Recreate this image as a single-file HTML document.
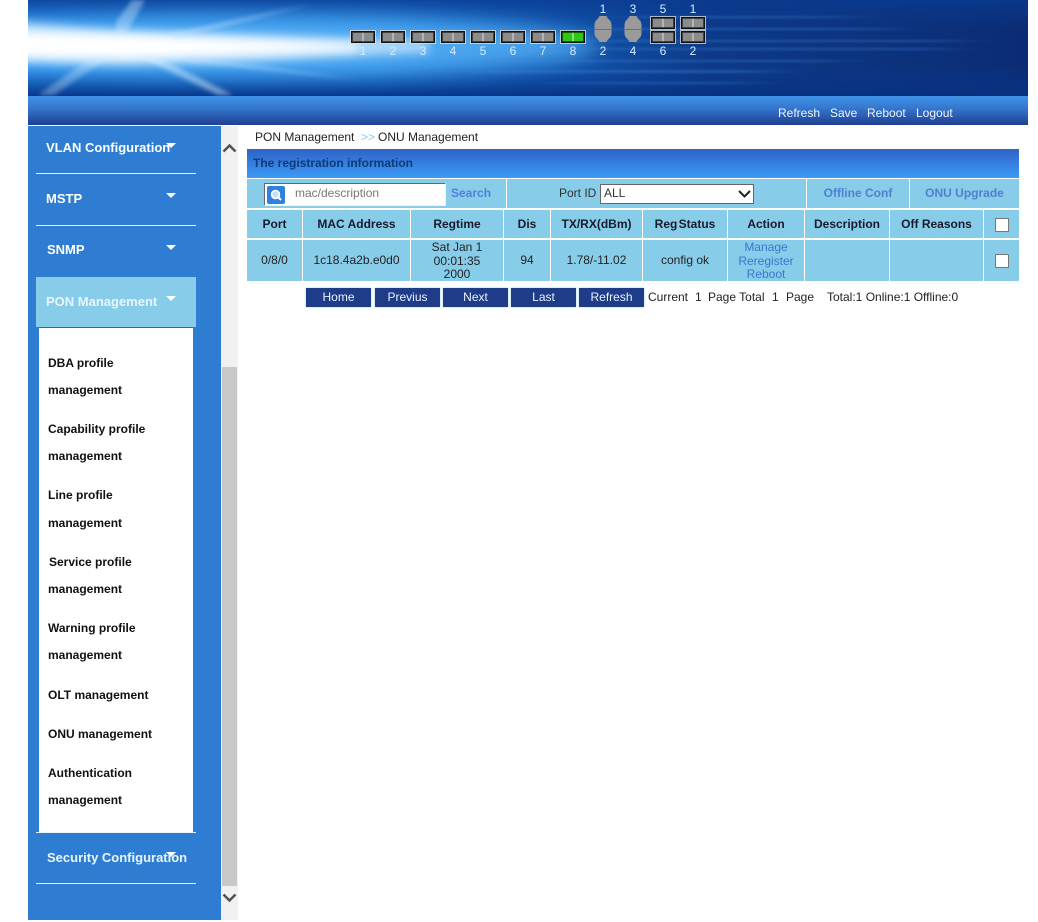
<!DOCTYPE html>
<html><head><meta charset="utf-8"><title>ONU Management</title>
<style>
html,body{margin:0;padding:0;background:#fff;width:1038px;height:922px;overflow:hidden}
body{position:relative;font-family:"Liberation Sans",sans-serif;font-size:12px;color:#222}
.a{position:absolute;white-space:nowrap}
.c{text-align:center}
.p{position:absolute;width:22px;height:10px;border:1px solid #111;box-shadow:0 0 0 1px rgba(225,225,225,.75),inset 0 0 0 1px rgba(0,0,0,.55);background:linear-gradient(90deg,#8c8c8c 0,#8c8c8c 47%,#dcdcdc 47%,#dcdcdc 53%,#8c8c8c 53%)}
.n{position:absolute;width:20px;text-align:center;font-size:12px;line-height:14px;color:#d4ecff}
.bar{position:absolute;background:#87cde9}
.h{position:absolute;top:210px;height:28px;line-height:28px;text-align:center;font-weight:bold;color:#1a1a2a;background:#87cde9}
.d{position:absolute;top:240px;height:41px;line-height:41px;text-align:center;color:#222;background:#87cde9}
.btn{position:absolute;top:288px;height:19px;width:65px;line-height:19px;text-align:center;color:#e8f2ff;background:#1f3c88;box-shadow:0 0 2px #8fc8ea}
.m{position:absolute;font-weight:bold;font-size:13px;line-height:16px;color:#fff;white-space:nowrap}
.s{position:absolute;left:48px;font-weight:bold;font-size:12px;line-height:16px;color:#111;white-space:nowrap}
.l{position:absolute;left:36px;width:160px;height:1px;background:#e8f4fc}
.t{position:absolute;width:0;height:0;border-left:5px solid transparent;border-right:5px solid transparent;border-top:5px solid #fff}
.cb{position:absolute;width:12px;height:12px;background:#fff;border:1px solid #777;border-radius:1px}
.lk{color:#3f74d0}
</style></head><body>

<svg class="a" style="left:28px;top:0" width="1000" height="96" viewBox="0 0 1000 96">
<defs>
<linearGradient id="bg" x1="0" x2="1" y1="0" y2="0"><stop offset="0" stop-color="#1a80e0"/><stop offset=".35" stop-color="#1a78d8"/><stop offset=".52" stop-color="#1258b0"/><stop offset=".68" stop-color="#0d3a88"/><stop offset="1" stop-color="#0b2c74"/></linearGradient>
<linearGradient id="v" x1="0" x2="0" y1="0" y2="1"><stop offset="0" stop-color="#0a3a90" stop-opacity=".8"/><stop offset=".3" stop-color="#0a3a90" stop-opacity="0"/><stop offset=".68" stop-color="#0a3a90" stop-opacity="0"/><stop offset="1" stop-color="#073080" stop-opacity=".9"/></linearGradient>
<filter id="b1" x="-30%" y="-60%" width="160%" height="220%"><feGaussianBlur stdDeviation="2"/></filter>
<filter id="b2" x="-30%" y="-100%" width="160%" height="300%"><feGaussianBlur stdDeviation="5"/></filter>
<filter id="b3" x="-30%" y="-100%" width="160%" height="300%"><feGaussianBlur stdDeviation="10"/></filter>
<filter id="st" x="-30%" y="-400%" width="160%" height="900%"><feGaussianBlur stdDeviation="25 1"/></filter>
</defs>
<rect width="1000" height="96" fill="url(#bg)"/>
<rect width="1000" height="96" fill="url(#v)"/>
<ellipse cx="200" cy="46" rx="370" ry="30" fill="#55b0f6" opacity=".85" filter="url(#b3)"/>
<polygon points="-30,20 90,31 230,35 400,41 400,52 230,61 90,65 -30,61" fill="#d8eeff" opacity=".75" filter="url(#b2)"/>
<polygon points="-30,31 100,34 240,40 330,44 330,50 240,54 100,59 -30,57" fill="#fff" filter="url(#b2)"/>
<polygon points="117,0 104,0 88,22 88,34 98,34" fill="#d4ecff" opacity=".4" filter="url(#b1)"/>
<polygon points="10,95 62,58 80,58 26,95" fill="#d4ecff" opacity=".33" filter="url(#b1)"/>
<polygon points="108,55 126,55 205,95 190,95" fill="#d8eeff" opacity=".48" filter="url(#b1)"/>
<polygon points="140,34 285,4 150,38" fill="#bfe2ff" opacity=".5" filter="url(#b1)"/>
<polygon points="160,56 335,80 160,62" fill="#bfe2ff" opacity=".45" filter="url(#b1)"/>
<g fill="#3f80d8" opacity=".4" filter="url(#st)">
<rect x="600" y="16" width="220" height="2"/><rect x="570" y="28" width="290" height="2"/><rect x="560" y="40" width="370" height="2"/><rect x="530" y="48" width="390" height="2"/><rect x="490" y="60" width="320" height="2"/><rect x="440" y="70" width="300" height="3"/><rect x="530" y="82" width="190" height="2"/>
</g>
</svg>

<div class="a" style="left:28px;top:96px;width:1000px;height:29px;background:linear-gradient(#3f92e8,#3578d0 40%,#1f3f92)"></div>
<div class="a" style="left:778px;top:105px;line-height:16px;color:#eef6ff">Refresh</div>
<div class="a" style="left:830px;top:105px;line-height:16px;color:#eef6ff">Save</div>
<div class="a" style="left:867px;top:105px;line-height:16px;color:#eef6ff">Reboot</div>
<div class="a" style="left:916px;top:105px;line-height:16px;color:#eef6ff">Logout</div>

<div class="p" style="left:351px;top:31px"></div>
<div class="p" style="left:381px;top:31px"></div>
<div class="p" style="left:411px;top:31px"></div>
<div class="p" style="left:441px;top:31px"></div>
<div class="p" style="left:471px;top:31px"></div>
<div class="p" style="left:501px;top:31px"></div>
<div class="p" style="left:531px;top:31px"></div>
<div class="p" style="left:561px;top:31px;background:linear-gradient(90deg,#2ec814 0,#2ec814 47%,#d8f0d0 47%,#d8f0d0 53%,#2ec814 53%)"></div>
<div class="p" style="left:651px;top:17px"></div>
<div class="p" style="left:651px;top:31px"></div>
<div class="p" style="left:681px;top:17px"></div>
<div class="p" style="left:681px;top:31px"></div>
<svg class="a" style="left:594px;top:15px" width="48" height="29" viewBox="0 0 48 29">
<g><path d="M5 1H12L13 3L16 6L17 9V19L16 22L13 25L12 27H5L4 25L1 22L0 19V9L1 6L4 3Z" transform="translate(.5 0)" fill="#9a9a9a"/><path d="M0 14.500H17" stroke="#4a78a8" stroke-width="1"/></g>
<g transform="translate(30 0)"><path d="M5 1H12L13 3L16 6L17 9V19L16 22L13 25L12 27H5L4 25L1 22L0 19V9L1 6L4 3Z" transform="translate(.5 0)" fill="#9a9a9a"/><path d="M0 14.500H17" stroke="#4a78a8" stroke-width="1"/></g>
</svg>
<div class="n" style="left:353px;top:44px">1</div><div class="n" style="left:383px;top:44px">2</div><div class="n" style="left:413px;top:44px">3</div><div class="n" style="left:443px;top:44px">4</div><div class="n" style="left:473px;top:44px">5</div><div class="n" style="left:503px;top:44px">6</div><div class="n" style="left:533px;top:44px">7</div><div class="n" style="left:563px;top:44px">8</div>
<div class="n" style="left:593px;top:44px">2</div><div class="n" style="left:623px;top:44px">4</div><div class="n" style="left:653px;top:44px">6</div><div class="n" style="left:683px;top:44px">2</div>
<div class="n" style="left:593px;top:2px">1</div><div class="n" style="left:623px;top:2px">3</div><div class="n" style="left:653px;top:2px">5</div><div class="n" style="left:683px;top:2px">1</div>

<!-- sidebar -->
<div class="a" style="left:28px;top:126px;width:193px;height:794px;background:#2f7dd2"></div>
<div class="m" style="left:46px;top:140px">VLAN Configuration</div>
<div class="t" style="left:166px;top:143px"></div>
<div class="l" style="top:173px"></div>
<div class="m" style="left:46px;top:191px">MSTP</div>
<div class="t" style="left:166px;top:193px"></div>
<div class="l" style="top:225px"></div>
<div class="m" style="left:47px;top:242px">SNMP</div>
<div class="t" style="left:166px;top:245px"></div>
<div class="a" style="left:36px;top:277px;width:160px;height:50px;background:#87cde9"></div>
<div class="m" style="left:46px;top:294px;color:#e8f6fc">PON Management</div>
<div class="t" style="left:166px;top:296px"></div>
<div class="a" style="left:39px;top:328px;width:154px;height:504px;background:#fff;box-shadow:0 -1px 0 #3a6a90"></div>
<div class="s" style="top:355px">DBA profile</div>
<div class="s" style="top:382px">management</div>
<div class="s" style="top:421px">Capability profile</div>
<div class="s" style="top:448px">management</div>
<div class="s" style="top:487px">Line profile</div>
<div class="s" style="top:515px">management</div>
<div class="s" style="top:554px;left:49px">Service profile</div>
<div class="s" style="top:581px">management</div>
<div class="s" style="top:620px">Warning profile</div>
<div class="s" style="top:647px">management</div>
<div class="s" style="top:687px">OLT management</div>
<div class="s" style="top:726px">ONU management</div>
<div class="s" style="top:765px">Authentication</div>
<div class="s" style="top:792px">management</div>
<div class="l" style="top:832px"></div>
<div class="m" style="left:47px;top:850px;color:#e8f6fc">Security Configuration</div>
<div class="t" style="left:166px;top:852px"></div>
<div class="l" style="top:883px"></div>

<!-- scrollbar -->
<div class="a" style="left:221px;top:126px;width:17px;height:794px;background:#f1f1f1"></div>
<div class="a" style="left:222px;top:367px;width:15px;height:519px;background:#c8c8c8"></div>
<svg class="a" style="left:221px;top:140px" width="17" height="14"><path d="M2.500 11.500L8.500 5.500L14.500 11.500" fill="none" stroke="#505050" stroke-width="2.400"/></svg>
<svg class="a" style="left:221px;top:891px" width="17" height="14"><path d="M2.500 3.500L8.500 9.500L14.500 3.500" fill="none" stroke="#505050" stroke-width="2.400"/></svg>

<!-- breadcrumb -->
<div class="a" style="left:255px;top:129px;line-height:16px;color:#222">PON Management</div>
<div class="a" style="left:361px;top:129px;line-height:16px;color:#7fd0e0">&gt;&gt;</div>
<div class="a" style="left:378px;top:129px;line-height:16px;color:#222">ONU Management</div>

<!-- title -->
<div class="a" style="left:247px;top:149px;width:772px;height:29px;background:linear-gradient(#2f62c8,#3a9cf4)"></div>
<div class="a" style="left:253px;top:155px;line-height:16px;font-weight:bold;color:#0f3a78">The registration information</div>

<!-- toolbar -->
<div class="bar" style="left:247px;top:179px;width:259px;height:29px"></div>
<div class="bar" style="left:507px;top:179px;width:299px;height:29px"></div>
<div class="bar" style="left:807px;top:179px;width:102px;height:29px"></div>
<div class="bar" style="left:910px;top:179px;width:109px;height:29px"></div>
<div class="a" style="left:264px;top:183px;width:181px;height:22px;background:#fff;border-left:1px solid #667;border-top:1px solid #667;box-sizing:border-box;box-shadow:1px 1px 0 #e8f5fb"></div>
<svg class="a" style="left:267px;top:186px" width="18" height="18"><rect width="18" height="18" rx="2" fill="#2f80dc"/><circle cx="8.500" cy="8.500" r="4" fill="#bfe4fa" stroke="#fff" stroke-width="1.500"/><path d="M11.500 11.500L14 14" stroke="#fff" stroke-width="2"/></svg>
<div class="a" style="left:295px;top:185px;line-height:16px;color:#777">mac/description</div>
<div class="a" style="left:451px;top:185px;line-height:16px;font-weight:bold;color:#4f80d8">Search</div>
<div class="a" style="left:559px;top:185px;line-height:16px;color:#333">Port ID</div>
<div class="a" style="left:600px;top:184px;width:154px;height:20px;box-sizing:border-box;background:#fff;border:1px solid #666;line-height:17px;padding-left:3px;color:#333">ALL</div>
<svg class="a" style="left:737px;top:188px" width="15" height="12"><path d="M2 3L7.500 8.500L13 3" fill="none" stroke="#222" stroke-width="2"/></svg>
<div class="a c" style="left:807px;top:185px;width:102px;line-height:16px;font-weight:bold;color:#4f80d0">Offline Conf</div>
<div class="a c" style="left:910px;top:185px;width:109px;line-height:16px;font-weight:bold;color:#4f80d0">ONU Upgrade</div>

<!-- table header -->
<div class="h" style="left:247px;width:55px">Port</div>
<div class="h" style="left:303px;width:107px">MAC Address</div>
<div class="h" style="left:411px;width:92px">Regtime</div>
<div class="h" style="left:504px;width:46px">Dis</div>
<div class="h" style="left:551px;width:91px">TX/RX(dBm)</div>
<div class="h" style="left:643px;width:84px;word-spacing:-2px">Reg Status</div>
<div class="h" style="left:728px;width:76px">Action</div>
<div class="h" style="left:805px;width:84px">Description</div>
<div class="h" style="left:890px;width:93px">Off Reasons</div>
<div class="h" style="left:984px;width:35px"></div>
<div class="cb" style="left:995px;top:218px"></div>

<!-- row -->
<div class="d" style="left:247px;width:55px">0/8/0</div>
<div class="d" style="left:303px;width:107px">1c18.4a2b.e0d0</div>
<div class="d" style="left:411px;width:92px;line-height:13.500px;padding-top:1px;height:40px">Sat Jan 1<br>00:01:35<br>2000</div>
<div class="d" style="left:504px;width:46px">94</div>
<div class="d" style="left:551px;width:91px">1.78/-11.02</div>
<div class="d" style="left:643px;width:84px">config ok</div>
<div class="d lk" style="left:728px;width:76px;line-height:13.500px;padding-top:1px;height:40px">Manage<br>Reregister<br>Reboot</div>
<div class="d" style="left:805px;width:84px"></div>
<div class="d" style="left:890px;width:93px"></div>
<div class="d" style="left:984px;width:35px"></div>
<div class="cb" style="left:995px;top:254px"></div>

<!-- pager -->
<div class="btn" style="left:306px">Home</div>
<div class="btn" style="left:375px">Previus</div>
<div class="btn" style="left:443px">Next</div>
<div class="btn" style="left:511px">Last</div>
<div class="btn" style="left:579px">Refresh</div>
<div class="a" style="left:648px;top:289px;line-height:16px;color:#222">Current</div>
<div class="a" style="left:695px;top:289px;line-height:16px;color:#222">1</div>
<div class="a" style="left:708px;top:289px;line-height:16px;color:#222">Page Total</div>
<div class="a" style="left:772px;top:289px;line-height:16px;color:#222">1</div>
<div class="a" style="left:786px;top:289px;line-height:16px;color:#222">Page</div>
<div class="a" style="left:827px;top:289px;line-height:16px;color:#222">Total:1 Online:1 Offline:0</div>

</body></html>
